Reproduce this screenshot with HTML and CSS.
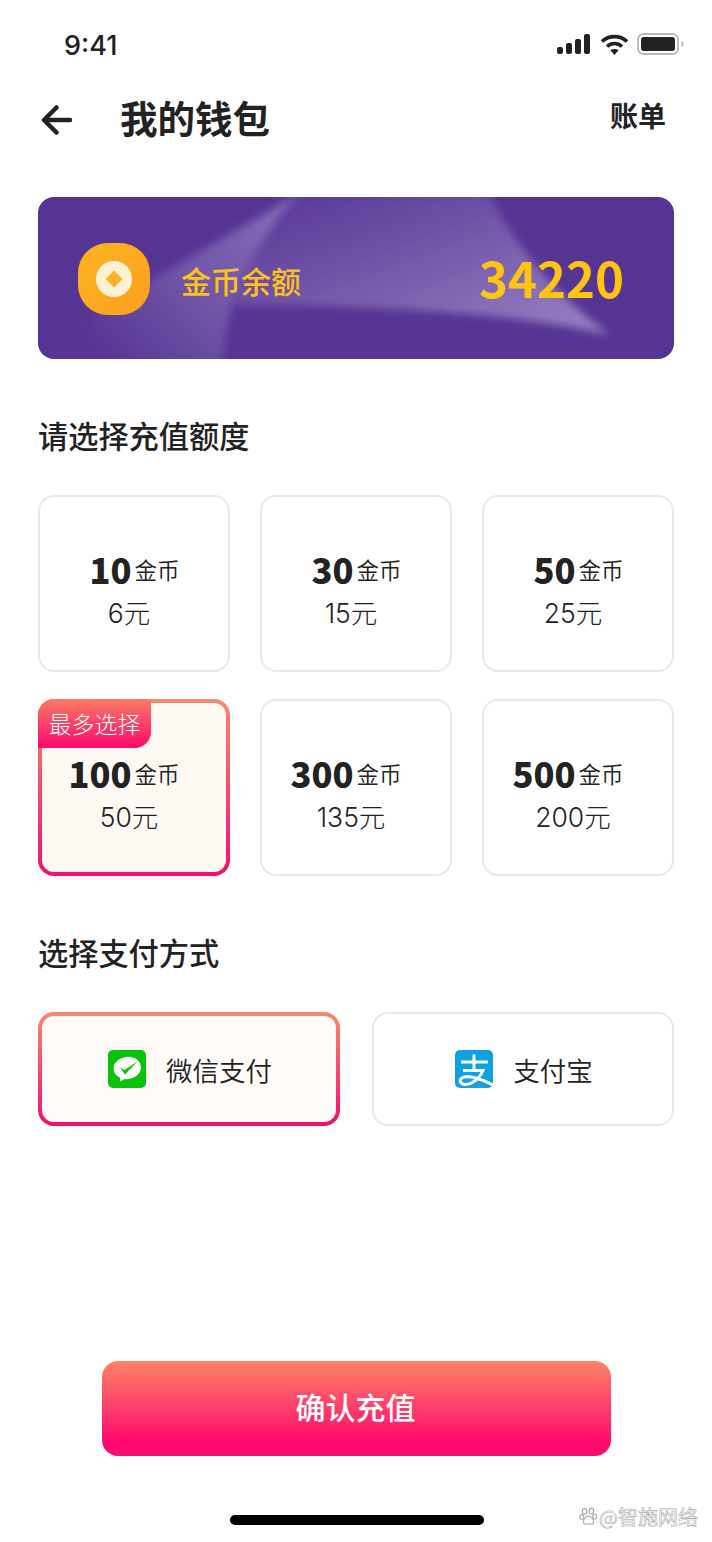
FILE: index.html
```html
<!DOCTYPE html>
<html lang="zh-CN">
<head>
    <meta charset="UTF-8">
    <meta name="viewport" content="width=device-width, initial-scale=1.0">
    <title>我的钱包</title>
    <link rel="stylesheet" href="styles.css">
</head>
<body>
    <div class="page">
        <div class="status-bar">
            <span class="time">9:41</span>
            <div class="status-icons">
                <svg width="33" height="20" viewBox="0 0 33 20" fill="#222">
                    <rect x="0" y="13" width="6" height="7" rx="2"/>
                    <rect x="9" y="9" width="6" height="11" rx="2"/>
                    <rect x="18" y="5" width="6" height="15" rx="2"/>
                    <rect x="27" y="0" width="6" height="20" rx="2"/>
                </svg>
                <svg width="29" height="21" viewBox="0 0 29 21" fill="none" stroke="#222" stroke-width="3.6">
                    <path d="M2 7.5C9 1 20 1 27 7.5"/>
                    <path d="M7 12.5C11.500 8.500 17.500 8.500 22 12.500"/>
                    <path d="M14.500 21L10.300 16.300C12.800 14.600 16.200 14.600 18.700 16.300Z" fill="#222" stroke="none"/>
                </svg>
                <svg class="battery-icon" width="48" height="22" viewBox="0 0 48 22">
                    <rect x="1" y="1" width="40" height="20" rx="5.500" fill="none" stroke="#b9b9b9" stroke-width="1.800"/>
                    <rect x="4" y="4" width="34" height="14" rx="3" fill="#222"/>
                    <path d="M44.500 8C46 8.500 46.500 9.500 46.500 11S46 13.500 44.500 14Z" fill="#b9b9b9"/>
                </svg>
            </div>
        </div>

        <header class="nav-bar">
            <svg class="back-icon" width="32" height="32" viewBox="0 0 32 32" fill="none" stroke="#222" stroke-width="4.500" stroke-linecap="round" stroke-linejoin="round">
                <path d="M3.500 16H29"/>
                <path d="M15.500 3.500L3 16L15.500 28.500"/>
            </svg>
            <h1 class="nav-title">我的钱包</h1>
            <span class="nav-link">账单</span>
        </header>

        <section class="balance-card">
            <svg class="balance-beams" viewBox="0 0 636 162" preserveAspectRatio="none">
                <defs>
                    <filter id="beam-blur"><feGaussianBlur stdDeviation="4"/></filter>
                    <linearGradient id="beam-left" x1="1" y1="0" x2="0" y2="0.600">
                        <stop offset="0" stop-color="#9b86c4" stop-opacity="0.700"/>
                        <stop offset="0.550" stop-color="#9b86c4" stop-opacity="0.400"/>
                        <stop offset="1" stop-color="#9b86c4" stop-opacity="0"/>
                    </linearGradient>
                    <linearGradient id="beam-right" x1="0.100" y1="0" x2="1" y2="0.900">
                        <stop offset="0" stop-color="#9b86c4" stop-opacity="0.050"/>
                        <stop offset="1" stop-color="#a994cf" stop-opacity="0.800"/>
                    </linearGradient>
                </defs>
                <path d="M262 -4L0 150V166H186C186 110 210 50 262 -4Z" fill="url(#beam-left)" filter="url(#beam-blur)"/>
                <path d="M250 -4H450C478 50 520 100 572 138C480 115 320 108 196 108C205 60 225 25 250 -4Z" fill="url(#beam-right)" filter="url(#beam-blur)"/>
            </svg>
            <div class="coin-icon"><span class="coin-hole"><span class="coin-diamond"></span></span></div>
            <span class="balance-label">金币余额</span>
            <span class="balance-value">34220</span>
        </section>

        <h2 class="section-title amount-title">请选择充值额度</h2>
        <div class="amount-grid">
            <div class="amount-card"><div class="coins"><b>10</b><span>金币</span></div><div class="price">6元</div></div>
            <div class="amount-card"><div class="coins"><b>30</b><span>金币</span></div><div class="price">15元</div></div>
            <div class="amount-card"><div class="coins"><b>50</b><span>金币</span></div><div class="price">25元</div></div>
            <div class="amount-card selected">
                <span class="badge">最多选择</span>
                <div class="coins"><b>100</b><span>金币</span></div><div class="price">50元</div>
            </div>
            <div class="amount-card"><div class="coins"><b>300</b><span>金币</span></div><div class="price">135元</div></div>
            <div class="amount-card"><div class="coins"><b>500</b><span>金币</span></div><div class="price">200元</div></div>
        </div>

        <h2 class="section-title pay-title">选择支付方式</h2>
        <div class="pay-row">
            <div class="pay-card selected">
                <svg width="38" height="38" viewBox="0 0 38 38">
                    <rect width="38" height="38" rx="5" fill="#09c309"/>
                    <path d="M19.500 7C11 7 5.500 12 5.500 18C5.500 21.500 7.500 24.300 10.500 26.200L10.500 30.500L15 28.500C16.500 29 18 29.200 19.500 29.200C27.500 29.200 33 24 33 18C33 12 27.500 7 19.500 7Z" fill="#fff" transform="rotate(-8 19 18)"/>
                    <path d="M12 17.500L16.500 20L29.500 11.500L17 24.500Z" fill="#09c309"/>
                </svg>
                <span class="pay-name">微信支付</span>
            </div>
            <div class="pay-card">
                <svg width="38" height="38" viewBox="0 0 38 38">
                    <rect width="38" height="38" rx="5" fill="#11a0e4"/>
                    <g fill="none" stroke="#fff" stroke-width="3" stroke-linecap="round">
                        <path d="M6 12H33" stroke-linecap="butt"/>
                        <path d="M19 5.500V20"/>
                        <path d="M8 20.500H28C25.500 27 18 34.500 10.500 34.500C6 34.500 4.500 31.500 5.500 29.500C7 26.500 13 26 19 27.500C25 29 32 32 38 35" stroke-linecap="butt"/>
                    </g>
                </svg>
                <span class="pay-name">支付宝</span>
            </div>
        </div>

        <div class="spacer"></div>

        <button class="confirm-button"><span class="confirm-text">确认充值</span></button>

        <div class="home-row">
            <span class="home-bar"></span>
            <span class="watermark">
                <svg width="19" height="19" viewBox="0 0 17 17" fill="#fff" stroke="#aaa" stroke-width="1">
                    <ellipse cx="5" cy="4" rx="2" ry="2.500"/>
                    <ellipse cx="11" cy="3.500" rx="2" ry="2.500"/>
                    <ellipse cx="2.500" cy="9" rx="1.800" ry="2.200"/>
                    <ellipse cx="14" cy="8.500" rx="1.800" ry="2.200"/>
                    <path d="M8.500 8C6 8 4 11 4 13.500C4 15.500 6 15.800 8.500 15C11 15.800 13 15.500 13 13.500C13 11 11 8 8.500 8Z"/>
                </svg>
                @智施网络
            </span>
        </div>
    </div>
</body>
</html>
```

FILE: styles.css
```css
* {
    box-sizing: border-box;
}

body {
    background-color: #ffffff;
    color: #222222;
    font-family: "Noto Sans CJK SC", "Noto Sans", sans-serif;
    margin: 0;
    padding: 0;
}

.page {
    width: 712px;
    height: 1542px;
    padding: 0 38px;
    display: flex;
    flex-direction: column;
    overflow: hidden;
}

/* status bar */
.status-bar {
    height: 87px;
    padding: 29px 0 0 26px;
    display: flex;
    justify-content: space-between;
    align-items: flex-start;
}

.time {
    font-family: Inter, sans-serif;
    font-size: 27px;
    font-weight: 500;
    line-height: 34px;
}

.status-icons {
    display: flex;
    align-items: center;
    gap: 10px;
    margin: 4px -11px 0 0;
}

.battery-icon {
    margin-left: -2px;
}

/* nav */
.nav-bar {
    height: 66px;
    display: flex;
    align-items: center;
}

.back-icon {
    margin-left: 3px;
}

.nav-title {
    margin: -7px 0 0 47px;
    font-size: 37.500px;
    font-weight: 700;
    line-height: 50px;
    flex: 1;
}

.nav-link {
    font-size: 28px;
    font-weight: 700;
    margin-right: 8px;
    margin-top: -10px;
}

/* balance */
.balance-card {
    position: relative;
    height: 162px;
    margin-top: 44px;
    padding: 0 50px 0 40px;
    background-color: #553494;
    border-radius: 16px;
    display: flex;
    align-items: center;
    overflow: hidden;
}

.balance-beams {
    position: absolute;
    left: 0;
    top: 0;
    width: 100%;
    height: 100%;
}

.coin-icon {
    position: relative;
    width: 72px;
    height: 72px;
    margin-top: 2px;
    border-radius: 30px;
    background: linear-gradient(135deg, #fdb422, #fb9f1e);
    display: flex;
    align-items: center;
    justify-content: center;
}

.coin-hole {
    width: 36px;
    height: 36px;
    border-radius: 50%;
    background-color: #fdf1d4;
    display: flex;
    align-items: center;
    justify-content: center;
}

.coin-diamond {
    width: 12px;
    height: 12px;
    background-color: #fdb12a;
    transform: rotate(45deg);
}

.balance-label {
    position: relative;
    margin: 3px 0 0 31px;
    color: #fcc11b;
    font-size: 30px;
    font-weight: 500;
    flex: 1;
}

.balance-value {
    position: relative;
    margin-top: -2px;
    color: #fdc512;
    font-size: 49.200px;
    font-weight: 700;
    line-height: 60px;
}

/* sections */
.section-title {
    margin: 0;
    font-size: 30.200px;
    font-weight: 500;
    line-height: 44px;
}

.amount-title {
    margin-top: 54px;
}

.amount-grid {
    margin-top: 38px;
    display: grid;
    grid-template-columns: repeat(3, 192px);
    grid-auto-rows: 177px;
    column-gap: 30px;
    row-gap: 27px;
}

.amount-card {
    position: relative;
    border: 2px solid #e8e8e8;
    border-radius: 16px;
    display: flex;
    flex-direction: column;
    align-items: center;
    justify-content: center;
    padding: 10px 0 0 0;
}

.amount-card.selected,
.pay-card.selected {
    border: 4px solid transparent;
    background: linear-gradient(#fff9f4, #fff9f4) padding-box, linear-gradient(#f98a6b, #f00f72) border-box;
}

.pay-card.selected {
    background: linear-gradient(#fffbf8, #fffbf8) padding-box, linear-gradient(#f98a6b, #f00f72) border-box;
}

.coins {
    width: 100%;
    display: grid;
    grid-template-columns: 1fr 1fr;
    align-items: center;
    column-gap: 3px;
    height: 46px;
    line-height: 46px;
    margin-top: 2px;
    padding-right: 2px;
}

.coins b {
    font-size: 34.500px;
    font-weight: 900;
    text-align: right;
}

.coins span {
    font-size: 22.500px;
    font-weight: 350;
}

.price {
    font-family: Inter, "Noto Sans CJK SC", sans-serif;
    font-size: 26.500px;
    font-weight: 300;
    line-height: 40px;
    margin: 1px 10px 0 0;
}

.badge {
    position: absolute;
    left: -4px;
    top: -4px;
    width: 113px;
    height: 49px;
    border-radius: 16px 0 16px 0;
    background: linear-gradient(#fa7a63, #fc0a6c);
    color: #ffffff;
    font-size: 23px;
    font-weight: 300;
    line-height: 49px;
    text-align: center;
}

.pay-title {
    margin-top: 54px;
}

.pay-row {
    margin-top: 38px;
    display: grid;
    grid-template-columns: 302px 302px;
    column-gap: 32px;
}

.pay-card {
    height: 114px;
    padding-left: 2px;
    border: 2px solid #e8e8e8;
    border-radius: 16px;
    display: flex;
    align-items: center;
    justify-content: center;
    gap: 20px;
}

.pay-name {
    font-size: 26.500px;
    font-weight: 350;
    line-height: 40px;
    margin-top: 2px;
}

.spacer {
    flex: 1;
}

.confirm-button {
    width: 509px;
    height: 95px;
    margin-left: 64px;
    border: none;
    border-radius: 16px;
    background: linear-gradient(#fd8466, #ff0a6e 85%);
    color: #ffffff;
    font-family: inherit;
    font-size: 30px;
    font-weight: 500;
}

.confirm-text {
    display: block;
    margin: -6px 2px 0 0;
}

.home-row {
    position: relative;
    height: 86px;
    display: flex;
    justify-content: center;
    padding: 59px 0 0 2px;
}

.home-bar {
    width: 254px;
    height: 10px;
    border-radius: 5px;
    background-color: #000000;
}

.watermark {
    position: absolute;
    left: 541px;
    top: 46px;
    display: flex;
    align-items: center;
    gap: 1px;
    white-space: nowrap;
    font-size: 20px;
    color: #ffffff;
    -webkit-text-stroke: 0.6px #aaaaaa;
}
```
